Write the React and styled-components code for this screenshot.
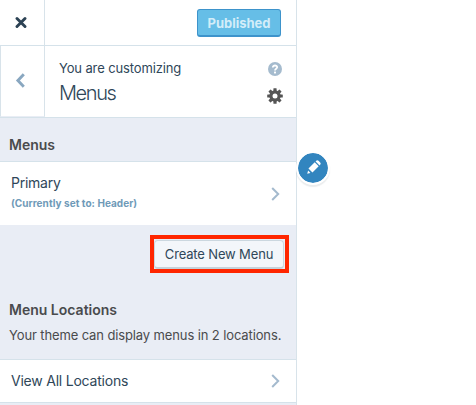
import React from "react";
import styled, { createGlobalStyle } from "styled-components";

const Global = createGlobalStyle`
  * { box-sizing: border-box; }
  body { margin: 0; background: #fff; overflow: hidden; }
`;

const Page = styled.div`
  position: relative;
  width: 476px;
  height: 405px;
  overflow: hidden;
  background: #fff;
  font-family: Inter, "Liberation Sans", sans-serif;
  font-size: 13px;
  color: #2f4759;
`;

const Sidebar = styled.aside`
  width: 297px;
  height: 405px;
  background: #e9edf5;
  border-right: 1px solid #d8e3ea;
`;

const TopBar = styled.header`
  display: flex;
  justify-content: space-between;
  align-items: flex-start;
  height: 46px;
  background: #fff;
  border-bottom: 1px solid #d5e2ea;
`;

const CloseButton = styled.div`
  display: flex;
  width: 45px;
  height: 45px;
  padding: 16px 0 0 15px;
  border-right: 1px solid #d8e3ea;
`;

const PublishButton = styled.div`
  width: 84px;
  height: 28px;
  margin: 9px 15px 0 0;
  border: 1px solid #3d93cb;
  border-bottom-width: 2px;
  border-radius: 3px;
  background: #66bee7;
  color: #d3edf9;
  font-weight: 650;
  line-height: 27px;
  text-align: center;
`;

const PanelHeader = styled.div`
  display: flex;
  height: 72px;
  background: #fff;
  border-bottom: 1px solid #d5e2ea;
`;

const BackButton = styled.div`
  display: flex;
  width: 45px;
  height: 71px;
  padding: 27px 0 0 14px;
  border: 1px solid #d8e3ea;
  border-width: 0 1px 1px;
  border-bottom-color: #e9edf5;
`;

const HeaderText = styled.div`
  flex: 1;
  padding: 13px 0 0 14px;
`;

const HeaderActions = styled.div`
  display: flex;
  flex-direction: column;
  align-items: center;
  gap: 12px;
  width: 42px;
  padding: 16px 0 0;
`;

const Label = styled.div`
  height: ${(p) => p.$h || 18}px;
  line-height: ${(p) => p.$h || 18}px;
  font-size: ${(p) => p.$size || 13}px;
  font-weight: ${(p) => p.$weight || 400};
  letter-spacing: ${(p) => p.$spacing || 0}px;
  color: ${(p) => p.$color || "#2f4759"};
  white-space: nowrap;
`;

const SectionTitle = styled.div`
  height: ${(p) => p.$h}px;
  padding: ${(p) => p.$top}px 0 0 9px;
`;

const Row = styled.div`
  display: flex;
  justify-content: space-between;
  align-items: center;
  height: ${(p) => p.$h}px;
  padding: 0 16px 0 11px;
  background: #fff;
  border-top: 1px solid #d5e2ea;
  border-bottom: ${(p) => (p.$closed ? "1px solid #d5e2ea" : "0")};
`;

const RowText = styled.div`
  padding-bottom: 2px;
`;

const ActionArea = styled.div`
  display: flex;
  justify-content: flex-end;
  height: 74px;
  padding: 10px 7px 0 0;
`;

const Highlight = styled.div`
  width: 139px;
  height: 38px;
  padding-top: 1px;
  border: 4px solid #ff2600;
`;

const CreateButton = styled.div`
  display: flex;
  justify-content: center;
  align-items: center;
  width: 130px;
  height: 29px;
  border: 1px solid #cbd7df;
  border-bottom: 2px solid #c5d2da;
  border-radius: 4px;
  background: #f3f6fa;
`;

const EditBadge = styled.div`
  position: absolute;
  left: 296px;
  top: 151px;
  display: flex;
  align-items: center;
  justify-content: center;
  width: 34px;
  height: 34px;
  border: 2px solid #fff;
  border-radius: 50%;
  background: #3285bf;
  background-clip: padding-box;
  box-shadow: 0 2px 1px rgba(46, 68, 83, 0.1);
`;

const Chevron = () => (
  <svg width="9" height="14" viewBox="0 0 9 14">
    <path d="M1.2 1 7.2 7l-6 6" fill="none" stroke="#a4bace" strokeWidth="2" />
  </svg>
);

const GearIcon = () => (
  <svg width="16" height="16" viewBox="0 0 16 16">
    <g fill="#555">
      {[0, 45, 90, 135].map((a) => (
        <rect key={a} x="6.4" y="0.2" width="3.2" height="15.6" rx="0.5" transform={`rotate(${a} 8 8)`} />
      ))}
      <circle cx="8" cy="8" r="5.7" />
    </g>
    <circle cx="8" cy="8" r="2.5" fill="#fff" />
  </svg>
);

const HelpIcon = () => (
  <svg width="14" height="14" viewBox="0 0 14 14">
    <circle cx="7" cy="7" r="7" fill="#a5bbce" />
    <path d="M4.8 5.4C4.8 2.8 9.3 2.9 9.2 5.3 9.1 6.8 7 6.7 7 8.5" fill="none" stroke="#fff" strokeWidth="1.8" />
    <rect x="6" y="9.5" width="2" height="1.9" rx=".4" fill="#fff" />
  </svg>
);

export default function App() {
  return (
    <Page>
      <Global />
      <Sidebar>
        <TopBar>
          <CloseButton>
            <svg width="12" height="13" viewBox="0 0 12 13">
              <path d="m2 2.5 8 8m0-8-8 8" stroke="#2c4254" strokeWidth="2.9" strokeLinecap="round" />
            </svg>
          </CloseButton>
          <PublishButton>Published</PublishButton>
        </TopBar>
        <PanelHeader>
          <BackButton>
            <svg width="11" height="16" viewBox="0 0 11 16">
              <path d="M8.8 1.2 2.9 7.6l5.9 6.1" fill="none" stroke="#89a7c0" strokeWidth="2.9" />
            </svg>
          </BackButton>
          <HeaderText>
            <Label $spacing={-0.13}>You are customizing</Label>
            <Label $size={20} $weight={270} $spacing={-1.4} $h={32}>Menus</Label>
          </HeaderText>
          <HeaderActions>
            <HelpIcon />
            <GearIcon />
          </HeaderActions>
        </PanelHeader>
        <SectionTitle $h={43} $top={18}>
          <Label $size={14} $weight={600} $color="#494b4d">Menus</Label>
        </SectionTitle>
        <Row $h={64}>
          <RowText>
            <Label $size={14} $spacing={-0.25} $h={20}>Primary</Label>
            <Label $size={10} $weight={700} $spacing={0.05} $color="#6f9ab8" $h={20}>(Currently set to: Header)</Label>
          </RowText>
          <Chevron />
        </Row>
        <ActionArea>
          <Highlight>
            <CreateButton>
              <Label $spacing={-0.15}>Create New Menu</Label>
            </CreateButton>
          </Highlight>
        </ActionArea>
        <SectionTitle $h={60} $top={1}>
          <Label $size={14} $weight={600} $color="#494b4d" $h={20}>Menu Locations</Label>
          <Label $spacing={-0.12} $color="#494b4d" $h={30}>Your theme can display menus in 2 locations.</Label>
        </SectionTitle>
        <Row $h={44} $closed>
          <Label $size={14} $spacing={-0.22}>View All Locations</Label>
          <Chevron />
        </Row>
      </Sidebar>
      <EditBadge>
        <svg width="18" height="18" viewBox="0 0 18 18">
          <g fill="#fff" transform="rotate(45 9 9)">
            <path d="M6.2 2.5V1.7Q6.2 0 7.8 0h2.4q1.6 0 1.6 1.7v.8z" />
            <path d="M6.2 3.8h5.6v8.8H6.2z" />
            <path d="m7.4 14.3h3.2L9 17.2z" />
          </g>
        </svg>
      </EditBadge>
    </Page>
  );
}
